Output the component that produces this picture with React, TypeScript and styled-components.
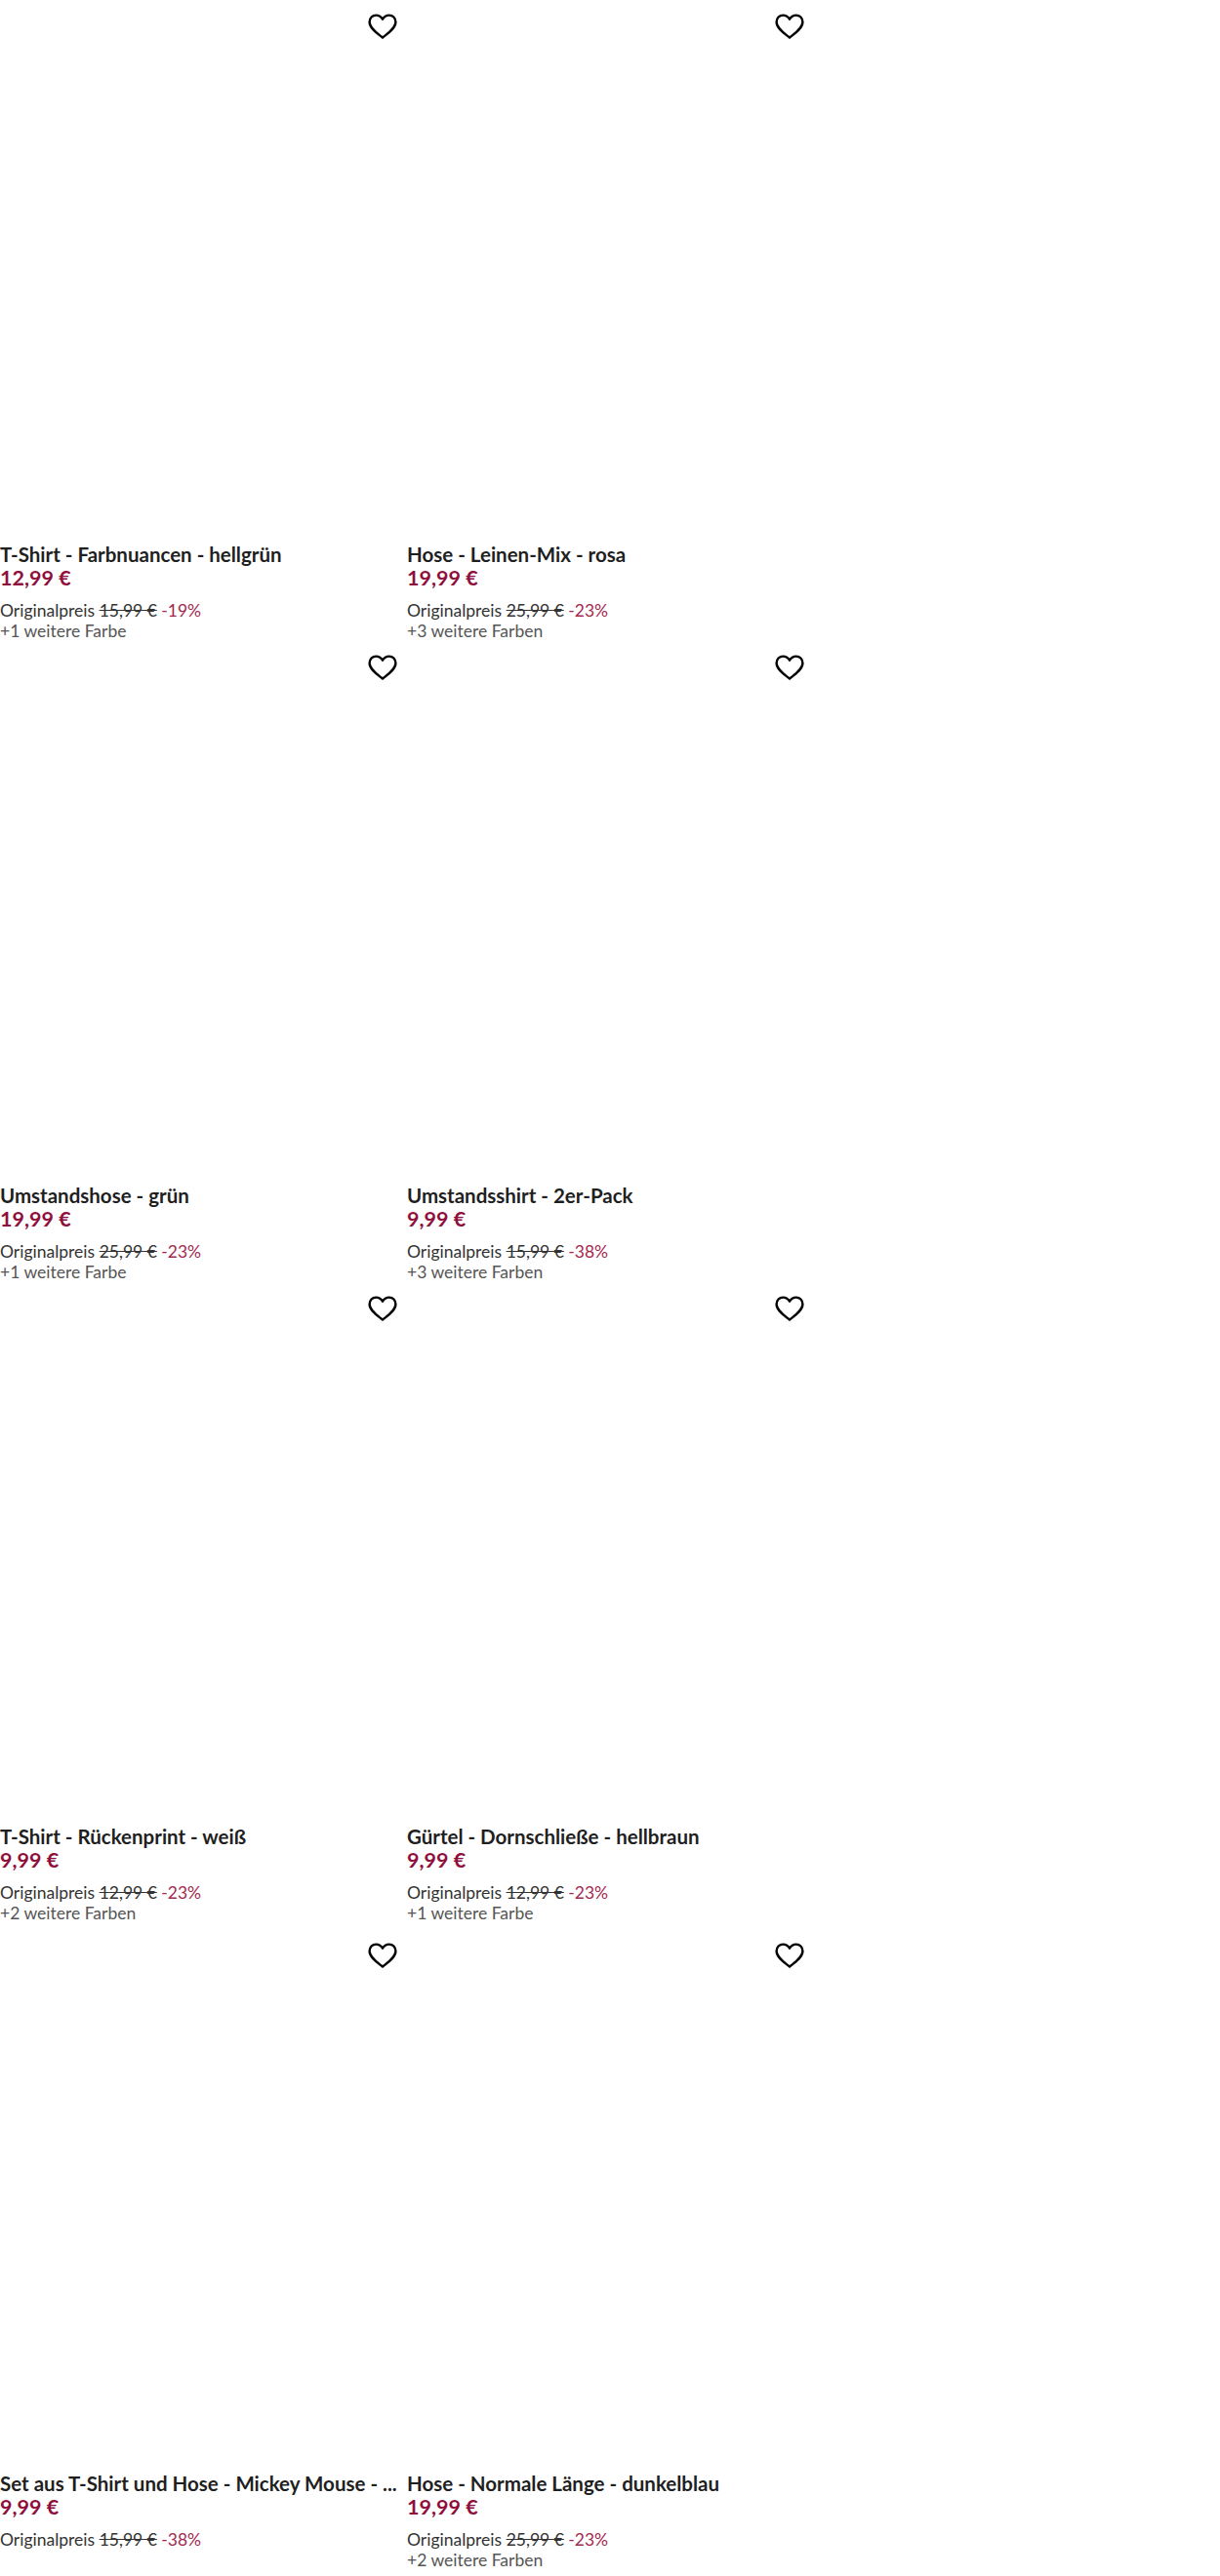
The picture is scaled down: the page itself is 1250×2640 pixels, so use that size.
import React from "react";
import styled, { createGlobalStyle } from "styled-components";

const Global = createGlobalStyle`
  html, body { margin: 0; padding: 0; background: #fff; }
  body { font-family: "Lato", "Open Sans", sans-serif; }
`;

const Grid = styled.div`
  display: grid;
  grid-template-columns: 409px 409px;
  column-gap: 8px;
  grid-template-rows: 657px 657px 663px 663px;
  width: 1250px;
  height: 2640px;
  overflow: hidden;
`;

const Card = styled.article`
  display: flex;
  flex-direction: column;
  min-width: 0;
`;

const Media = styled.div`
  height: 555px;
  flex: none;
  display: flex;
  justify-content: flex-end;
  align-items: flex-start;
  padding: 14px 2px 0 0;
  box-sizing: border-box;
`;

const Fav = styled.button`
  width: 30px;
  height: 26px;
  padding: 0;
  border: 0;
  background: none;
  display: flex;
`;

const Title = styled.div`
  flex: none;
  font-size: 20.5px;
  line-height: 26px;
  font-weight: 700;
  color: #1f1f1f;
  white-space: nowrap;
`;

const Price = styled.div`
  flex: none;
  font-size: 21.5px;
  line-height: 22px;
  font-weight: 700;
  color: #8f0f3c;
`;

const PriceRow = styled.div`
  flex: none;
  margin-top: 12px;
  font-size: 17.5px;
  line-height: 22px;
  color: #333;
`;

const Old = styled.s`
  color: #333;
`;

const Discount = styled.span`
  color: #a3294f;
`;

const Colors = styled.div`
  flex: none;
  font-size: 17.5px;
  line-height: 20px;
  color: #555;
`;

const Heart = () => (
  <svg width="30" height="26" viewBox="0 0 30 26" fill="none">
    <path
      d="M15 24.6C10.5 20.8 1.6 15.4 1.6 8.6C1.6 4.4 4.6 1.6 8.2 1.6C11 1.6 13.6 3.1 15 5.8C16.4 3.1 19 1.6 21.8 1.6C25.4 1.6 28.4 4.4 28.4 8.6C28.4 15.4 19.5 20.8 15 24.6Z"
      stroke="#000"
      strokeWidth="2.4"
      strokeLinejoin="round"
    />
  </svg>
);

const items = [
  ["T-Shirt - Farbnuancen - hellgrün", "12,99 €", "15,99 €", "-19%", "+1 weitere Farbe"],
  ["Hose - Leinen-Mix - rosa", "19,99 €", "25,99 €", "-23%", "+3 weitere Farben"],
  ["Umstandshose - grün", "19,99 €", "25,99 €", "-23%", "+1 weitere Farbe"],
  ["Umstandsshirt - 2er-Pack", "9,99 €", "15,99 €", "-38%", "+3 weitere Farben"],
  ["T-Shirt - Rückenprint - weiß", "9,99 €", "12,99 €", "-23%", "+2 weitere Farben"],
  ["Gürtel - Dornschließe - hellbraun", "9,99 €", "12,99 €", "-23%", "+1 weitere Farbe"],
  ["Set aus T-Shirt und Hose - Mickey Mouse - ...", "9,99 €", "15,99 €", "-38%", ""],
  ["Hose - Normale Länge - dunkelblau", "19,99 €", "25,99 €", "-23%", "+2 weitere Farben"],
];

export default function App() {
  return (
    <>
      <Global />
      <Grid>
        {items.map(([title, price, old, disc, colors]) => (
          <Card key={title}>
            <Media>
              <Fav aria-label="Merken">
                <Heart />
              </Fav>
            </Media>
            <Title>{title}</Title>
            <Price>{price}</Price>
            <PriceRow>
              Originalpreis <Old>{old}</Old> <Discount>{disc}</Discount>
            </PriceRow>
            {colors && <Colors>{colors}</Colors>}
          </Card>
        ))}
      </Grid>
    </>
  );
}
